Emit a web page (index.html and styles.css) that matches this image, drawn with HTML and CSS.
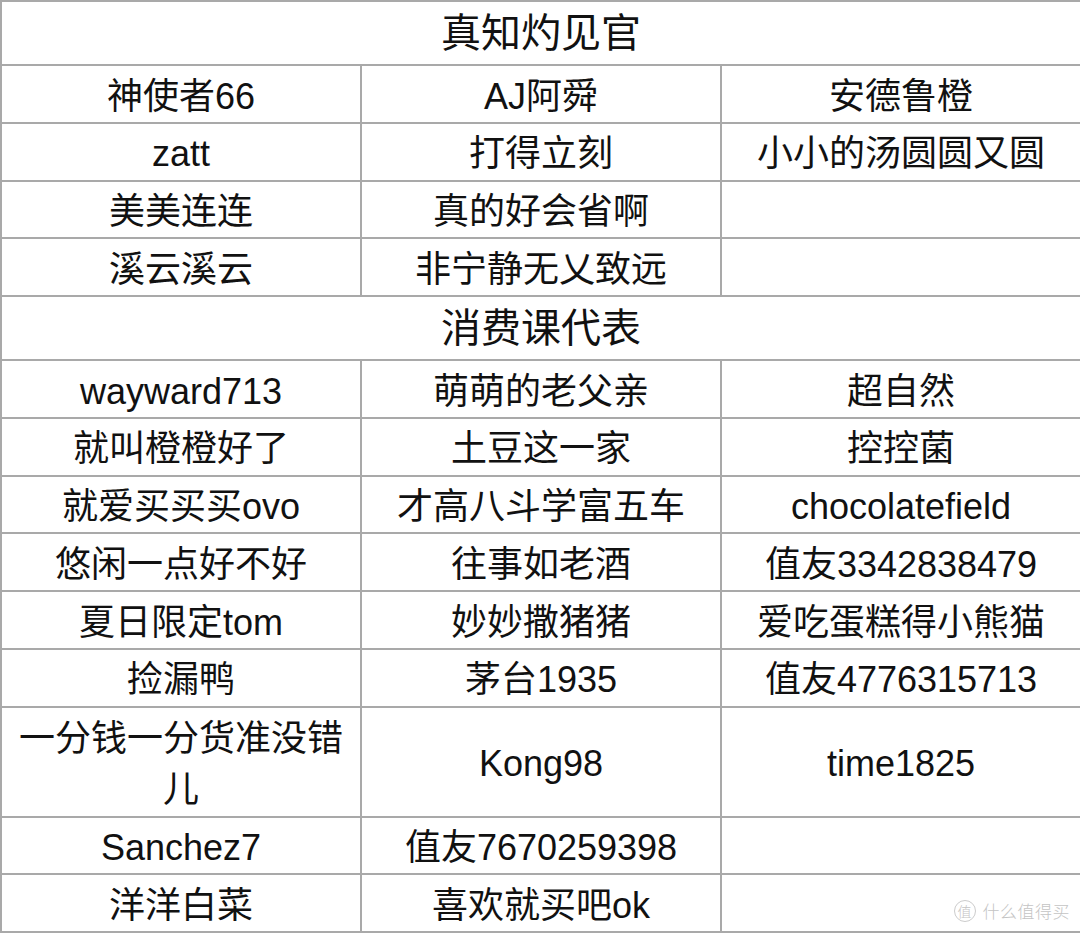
FILE: index.html
```html
<!DOCTYPE html>
<html lang="zh-CN">
<head>
<meta charset="utf-8">
<title>名单</title>
<link rel="stylesheet" href="styles.css">
</head>
<body>
<div class="page">
<table class="roster">
  <colgroup><col class="c"><col class="c"><col class="c"></colgroup>
  <tbody>
    <tr class="head"><td colspan="3">真知灼见官</td></tr>
    <tr><td>神使者66</td><td>AJ阿舜</td><td>安德鲁橙</td></tr>
    <tr><td>zatt</td><td>打得立刻</td><td>小小的汤圆圆又圆</td></tr>
    <tr><td>美美连连</td><td>真的好会省啊</td><td></td></tr>
    <tr><td>溪云溪云</td><td>非宁静无乂致远</td><td></td></tr>
    <tr class="head"><td colspan="3">消费课代表</td></tr>
    <tr><td>wayward713</td><td>萌萌的老父亲</td><td>超自然</td></tr>
    <tr><td>就叫橙橙好了</td><td>土豆这一家</td><td>控控菌</td></tr>
    <tr><td>就爱买买买ovo</td><td>才高八斗学富五车</td><td>chocolatefield</td></tr>
    <tr><td>悠闲一点好不好</td><td>往事如老酒</td><td>值友3342838479</td></tr>
    <tr><td>夏日限定tom</td><td>妙妙撒猪猪</td><td>爱吃蛋糕得小熊猫</td></tr>
    <tr><td>捡漏鸭</td><td>茅台1935</td><td>值友4776315713</td></tr>
    <tr class="tall"><td>一分钱一分货准没错儿</td><td>Kong98</td><td>time1825</td></tr>
    <tr><td>Sanchez7</td><td>值友7670259398</td><td></td></tr>
    <tr><td>洋洋白菜</td><td>喜欢就买吧ok</td><td></td></tr>
  </tbody>
</table>
<div class="watermark"><span class="wm-logo">值</span><span class="wm-text">什么值得买</span></div>
</div>
</body>
</html>
```

FILE: styles.css
```css
html, body {
  margin: 0;
  padding: 0;
  background: #ffffff;
  overflow: hidden;
}
.page {
  position: relative;
  width: 1080px;
  height: 933px;
  overflow: hidden;
}
.roster {
  border-collapse: separate;
  border-spacing: 0;
  table-layout: fixed;
  width: 1082px;
  border-top: 2px solid #a9a9a9;
  border-left: 2px solid #a9a9a9;
  font-family: "Liberation Sans", "Noto Sans CJK SC", sans-serif;
  color: #111111;
}
.roster .c {
  width: 360px;
}
.roster td {
  border-right: 2px solid #a9a9a9;
  border-bottom: 2px solid #a9a9a9;
  text-align: center;
  vertical-align: middle;
  font-size: 36px;
  line-height: 51px;
  padding: 4.5px 6px 0.25px;
  box-sizing: content-box;
}
.roster .tall td {
  padding-top: 5px;
  padding-bottom: 1px;
}
.roster .head td {
  font-size: 40px;
  line-height: 58px;
  padding: 2px 6px 2px;
}
.watermark {
  position: absolute;
  right: 10px;
  bottom: 11px;
  display: flex;
  align-items: center;
  gap: 7px;
  color: #c4c4c4;
  font-family: "Noto Sans CJK SC", sans-serif;
  font-weight: 300;
}
.wm-logo {
  width: 20px;
  height: 20px;
  border: 1.5px solid #cccccc;
  border-radius: 50%;
  font-size: 14px;
  line-height: 20px;
  text-align: center;
}
.wm-text {
  font-size: 17px;
  letter-spacing: 0.5px;
  line-height: 22px;
}
```
